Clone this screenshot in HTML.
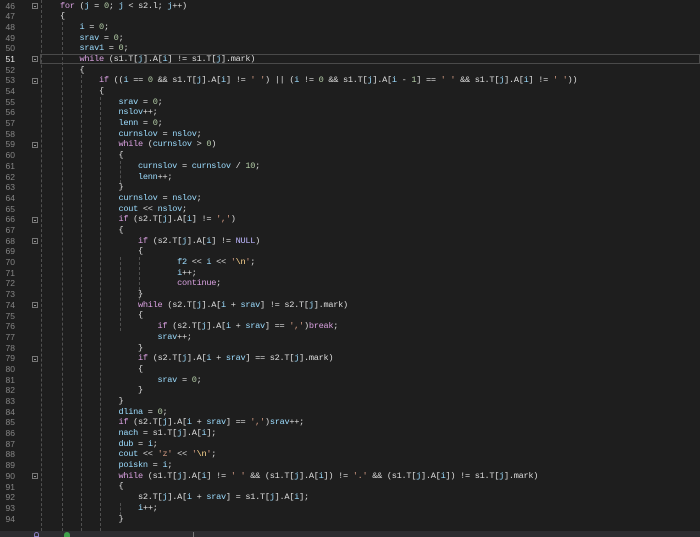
<!DOCTYPE html>
<html><head><meta charset="utf-8"><style>
html,body{margin:0;padding:0;width:700px;height:537px;overflow:hidden;background:#1e1e1e;}
.ln{position:absolute;left:0;width:15px;text-align:right;font:8.5px "Liberation Sans",sans-serif;color:#858585;}
.ln.cur{color:#e8e8e8}
pre{position:absolute;left:60px;top:0.5px;margin:0;font:8.6px/10.69px "Liberation Mono",monospace;letter-spacing:-0.28px;color:#dcdcdc;}
.k{color:#d8a0df}.v{color:#9cdcfe}.n{color:#b5cea8}.s{color:#d69d85}.m{color:#beb7ff}.e{color:#ffd68f}
.g{position:absolute;width:0;border-left:1px dashed #505050;}
.f{position:absolute;left:32px;width:6px;height:6px;border:1px solid #777;box-sizing:border-box;}
.f:after{content:"";position:absolute;left:1px;top:2px;width:2px;height:1px;background:#999}
</style></head><body>
<div style="position:absolute;left:40px;top:54px;width:660px;height:10px;border:1px solid #4a4a4a;box-sizing:border-box"></div>
<div class="g" style="left:41px;top:0;height:531px"></div>
<div class="g" style="left:62px;top:22px;height:509px"></div>
<div class="g" style="left:81px;top:75px;height:456px"></div>
<div class="g" style="left:100px;top:97px;height:434px"></div>
<div class="g" style="left:120px;top:161px;height:22px"></div>
<div class="g" style="left:120px;top:257px;height:74px"></div>
<div class="g" style="left:139px;top:257px;height:43px"></div>
<div class="g" style="left:120px;top:503px;height:12px"></div>
<div class="f" style="top:3px"></div><div class="f" style="top:56px"></div><div class="f" style="top:78px"></div>
<div class="f" style="top:142px"></div><div class="f" style="top:217px"></div><div class="f" style="top:238px"></div>
<div class="f" style="top:302px"></div><div class="f" style="top:356px"></div><div class="f" style="top:473px"></div>
<div id="nums"></div>
<pre><span class="k">for</span> (<span class="v">j</span> = <span class="n">0</span>; <span class="v">j</span> &lt; s2.l; <span class="v">j</span>++)
{
    <span class="v">i</span> = <span class="n">0</span>;
    <span class="v">srav</span> = <span class="n">0</span>;
    <span class="v">srav1</span> = <span class="n">0</span>;
    <span class="k">while</span> (s1.T[<span class="v">j</span>].A[<span class="v">i</span>] != s1.T[<span class="v">j</span>].mark)
    {
        <span class="k">if</span> ((<span class="v">i</span> == <span class="n">0</span> &amp;&amp; s1.T[<span class="v">j</span>].A[<span class="v">i</span>] != <span class="s">' '</span>) || (<span class="v">i</span> != <span class="n">0</span> &amp;&amp; s1.T[<span class="v">j</span>].A[<span class="v">i</span> - <span class="n">1</span>] == <span class="s">' '</span> &amp;&amp; s1.T[<span class="v">j</span>].A[<span class="v">i</span>] != <span class="s">' '</span>))
        {
            <span class="v">srav</span> = <span class="n">0</span>;
            <span class="v">nslov</span>++;
            <span class="v">lenn</span> = <span class="n">0</span>;
            <span class="v">curnslov</span> = <span class="v">nslov</span>;
            <span class="k">while</span> (<span class="v">curnslov</span> &gt; <span class="n">0</span>)
            {
                <span class="v">curnslov</span> = <span class="v">curnslov</span> / <span class="n">10</span>;
                <span class="v">lenn</span>++;
            }
            <span class="v">curnslov</span> = <span class="v">nslov</span>;
            <span class="v">cout</span> &lt;&lt; <span class="v">nslov</span>;
            <span class="k">if</span> (s2.T[<span class="v">j</span>].A[<span class="v">i</span>] != <span class="s">','</span>)
            {
                <span class="k">if</span> (s2.T[<span class="v">j</span>].A[<span class="v">i</span>] != <span class="m">NULL</span>)
                {
                        <span class="v">f2</span> &lt;&lt; <span class="v">i</span> &lt;&lt; <span class="s">'<span class="e">\n</span>'</span>;
                        <span class="v">i</span>++;
                        <span class="k">continue</span>;
                }
                <span class="k">while</span> (s2.T[<span class="v">j</span>].A[<span class="v">i</span> + <span class="v">srav</span>] != s2.T[<span class="v">j</span>].mark)
                {
                    <span class="k">if</span> (s2.T[<span class="v">j</span>].A[<span class="v">i</span> + <span class="v">srav</span>] == <span class="s">','</span>)<span class="k">break</span>;
                    <span class="v">srav</span>++;
                }
                <span class="k">if</span> (s2.T[<span class="v">j</span>].A[<span class="v">i</span> + <span class="v">srav</span>] == s2.T[<span class="v">j</span>].mark)
                {
                    <span class="v">srav</span> = <span class="n">0</span>;
                }
            }
            <span class="v">dlina</span> = <span class="n">0</span>;
            <span class="k">if</span> (s2.T[<span class="v">j</span>].A[<span class="v">i</span> + <span class="v">srav</span>] == <span class="s">','</span>)<span class="v">srav</span>++;
            <span class="v">nach</span> = s1.T[<span class="v">j</span>].A[<span class="v">i</span>];
            <span class="v">dub</span> = <span class="v">i</span>;
            <span class="v">cout</span> &lt;&lt; <span class="s">'z'</span> &lt;&lt; <span class="s">'<span class="e">\n</span>'</span>;
            <span class="v">poiskn</span> = <span class="v">i</span>;
            <span class="k">while</span> (s1.T[<span class="v">j</span>].A[<span class="v">i</span>] != <span class="s">' '</span> &amp;&amp; (s1.T[<span class="v">j</span>].A[<span class="v">i</span>]) != <span class="s">'.'</span> &amp;&amp; (s1.T[<span class="v">j</span>].A[<span class="v">i</span>]) != s1.T[<span class="v">j</span>].mark)
            {
                s2.T[<span class="v">j</span>].A[<span class="v">i</span> + <span class="v">srav</span>] = s1.T[<span class="v">j</span>].A[<span class="v">i</span>];
                <span class="v">i</span>++;
            }</pre>
<div style="position:absolute;left:0;top:531px;width:700px;height:6px;background:#2d2d30"></div>
<div style="position:absolute;left:64px;top:532px;width:6px;height:5px;border-radius:3px 3px 0 0;background:#3fa04a"></div>
<div style="position:absolute;left:34px;top:532px;width:5px;height:5px;border-radius:3px 3px 0 0;border:1px solid #8a7fc0;box-sizing:border-box"></div>
<div style="position:absolute;left:193px;top:532px;width:1px;height:5px;background:#777"></div>
<script>
var h='';for(var i=46;i<=94;i++){h+='<div class="ln'+(i==51?' cur':'')+'" style="top:'+(0.5+(i-46)*10.69)+'px">'+i+'</div>';}
document.getElementById('nums').innerHTML=h;
</script>
</body></html>
